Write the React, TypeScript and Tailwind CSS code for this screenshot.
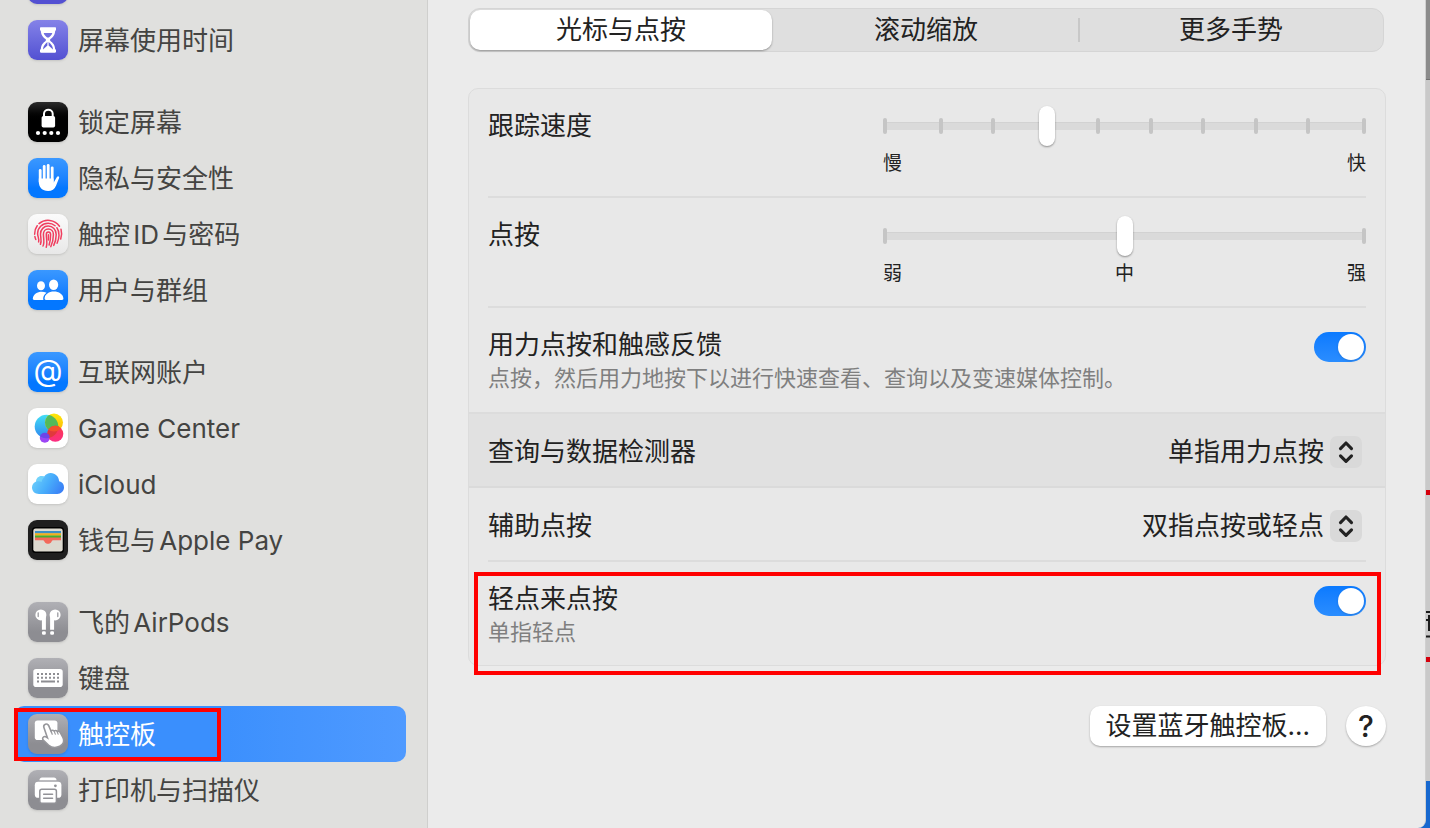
import { useState } from 'react';
import type { ReactNode } from 'react';

function Tile({ className, children }: { className: string; children?: ReactNode }) {
  return (
    <span className={`w-10 h-10 shrink-0 rounded-[9px] overflow-hidden shadow-sm flex items-center justify-center ${className}`}>
      {children}
    </span>
  );
}

function ScreenTimeIcon() {
  return (
    <Tile className="bg-linear-to-b from-[#8582e8] to-[#5350d2]">
      <svg viewBox="0 0 40 40" className="w-10 h-10" fill="#fff">
        <path
          fillRule="evenodd"
          d="M13 7.3h14c.8 0 1 .5 1 1.2v1.2c0 .7-.3 1-.8 1.1-.2 4.6-2.6 6.6-4.7 8.3-.6.5-.6 1.3 0 1.8 2.1 1.700 4.500 3.700 4.700 8.300.5.1.8.4.8 1.100v1.200c0 .7-.2 1.200-1 1.200H13c-.8 0-1-.5-1-1.200v-1.200c0-.7.3-1 .8-1.100.2-4.600 2.600-6.600 4.700-8.300.6-.5.6-1.300 0-1.800-2.100-1.700-4.500-3.700-4.700-8.300-.5-.1-.8-.4-.8-1.100V8.500c0-.7.2-1.200 1-1.200zM15.700 13c.6 2 1.900 3.300 3.400 4.500h1.800c1.500-1.200 2.800-2.500 3.400-4.500zM15 29.500l4.400-4v-3.600c-2.400 2-4.200 3.800-4.400 7.600zM25 29.500l-4.400-4v-3.600c2.400 2 4.200 3.800 4.400 7.600z"
        />
      </svg>
    </Tile>
  );
}

function LockIcon() {
  return (
    <Tile className="bg-linear-to-b from-[#2c2c2c] to-black to-50%">
      <svg viewBox="0 0 40 40" className="w-10 h-10" fill="#fff">
        <path d="M16 15v-3.200c0-5.300 8.700-5.300 8.700 0V15" fill="none" stroke="#fff" strokeWidth="2" />
        <rect x="13.6" y="14" width="13.5" height="11.5" rx="1.8" />
        <circle cx="10" cy="31" r="2.1" />
        <circle cx="16.7" cy="31" r="2.1" />
        <circle cx="23.3" cy="31" r="2.1" />
        <circle cx="30" cy="31" r="2.1" />
      </svg>
    </Tile>
  );
}

function HandIcon() {
  return (
    <Tile className="bg-linear-to-b from-[#3a98ff] to-[#0377ff] to-75%">
      <svg viewBox="0 0 40 40" className="w-10 h-10" fill="#fff">
        <g stroke="#fff" strokeWidth="2.8" strokeLinecap="round">
          <path d="M12.2 12.5V24" />
          <path d="M16.2 8.5V22" />
          <path d="M20.2 7.4V22" />
          <path d="M24.2 9.8V24" />
        </g>
        <path d="M10.8 20.5h14.8v4.2l3.3-5.700c1-1.400 2.700-.6 2.200 1.100l-3 7.400c-1.500 3.700-4.200 5.600-8 5.600-5.900 0-9.300-3.700-9.300-9.500z" />
      </svg>
    </Tile>
  );
}

function TouchIdIcon() {
  return (
    <Tile className="bg-linear-to-b from-[#fbfbfb] to-[#e8e8e8]">
      <svg viewBox="0 0 40 40" className="w-10 h-10" fill="none" stroke="#f03e5f" strokeWidth="1.5" strokeLinecap="round">
        <path d="M11 9.600a14 14 0 0 1 20.500 2.600" />
        <path d="M33 15.200c1 3.400.9 6.500-.3 9.800" />
        <path d="M9.200 11.700c-2 2.700-2.700 5.300-2.600 8.500M6.900 22.600c.2 1 .5 2 .9 2.900" />
        <path d="M10.600 27.900c.9-2.500-1-5.400-1-8.400 0-5.800 4.700-10.300 10.500-10.300 2.700 0 5.100.9 7 2.500M28.900 13.700c1.700 2.400 2.200 4.700 2.100 7.500-.1 3.200-.8 5.600-1.900 8" />
        <path d="M12.400 30.300c1.600-3.300.1-6.800.1-10.300 0-4.500 3.300-7.900 7.700-7.900 4.600 0 8 3.600 8 8.300 0 4.300-.8 7.800-2.500 11" />
        <path d="M15 32c1.800-3.600.4-7.900.4-11.800 0-3 2-5.200 4.900-5.200s5.100 2.300 5.100 5.400c0 4.700-.9 8.500-2.600 12.200" />
        <path d="M18.200 33.200c1.500-4 .1-8.500.1-12.800 0-1.500.8-2.500 2.100-2.500 1.400 0 2.200 1 2.200 2.600 0 3.900-.4 7.400-1.500 10.600" />
        <path d="M20.400 20.800v5.200" />
      </svg>
    </Tile>
  );
}

function UsersIcon() {
  return (
    <Tile className="bg-linear-to-b from-[#3a98ff] to-[#0377ff] to-75%">
      <svg viewBox="0 0 40 40" className="w-10 h-10" fill="#fff">
        <ellipse cx="13" cy="15.7" rx="4" ry="4.5" />
        <path d="M18.600 22.800c-5.800-2.500-13.200-.2-13.800 5.800 0 1 .4 1.400 1.400 1.400h9.200c-.8-2.700.6-5.500 3.200-7.200z" />
        <ellipse cx="25.6" cy="14.8" rx="4.6" ry="5.2" />
        <path d="M25.900 21.600c5 0 9.300 2.700 9.500 7 0 1-.4 1.400-1.400 1.400H18c-1 0-1.400-.4-1.400-1.400.2-4.300 4.300-7 9.300-7z" />
      </svg>
    </Tile>
  );
}

function AtIcon() {
  return (
    <Tile className="bg-linear-to-b from-[#3a98ff] to-[#0377ff] to-75% text-white text-[30px] leading-8">
      <span className="pb-1">@</span>
    </Tile>
  );
}

function GameCenterIcon() {
  return (
    <Tile className="bg-white">
      <svg viewBox="0 0 40 40" className="w-10 h-10">
        <defs>
          <linearGradient id="gcBlue" x1="0" y1="0" x2="0" y2="1">
            <stop offset="0" stopColor="#43dff5" />
            <stop offset="1" stopColor="#2f86f0" />
          </linearGradient>
          <linearGradient id="gcYellow" x1="0" y1="0" x2="0" y2="1">
            <stop offset="0" stopColor="#fde80a" />
            <stop offset="1" stopColor="#fdb50a" />
          </linearGradient>
          <linearGradient id="gcPink" x1="0" y1="0" x2="0" y2="1">
            <stop offset="0" stopColor="#fb3b4c" />
            <stop offset="1" stopColor="#fb2d83" />
          </linearGradient>
          <clipPath id="gcBlueClip">
            <circle cx="18.5" cy="18.5" r="11.8" />
          </clipPath>
          <clipPath id="gcYellowClip">
            <circle cx="26" cy="14.6" r="9" />
          </clipPath>
        </defs>
        <circle cx="16.8" cy="29.8" r="5" fill="#9c45f5" />
        <circle cx="18.5" cy="18.5" r="11.8" fill="url(#gcBlue)" />
        <circle cx="26" cy="14.6" r="9" fill="url(#gcYellow)" />
        <circle cx="26" cy="14.6" r="9" fill="#54b95a" clipPath="url(#gcBlueClip)" />
        <circle cx="27.3" cy="25.8" r="8" fill="url(#gcPink)" />
        <circle cx="27.3" cy="25.8" r="8" fill="#e0393c" clipPath="url(#gcBlueClip)" />
        <circle cx="27.3" cy="25.8" r="8" fill="#f4512c" clipPath="url(#gcYellowClip)" />
        <circle cx="16.8" cy="29.8" r="5" fill="#6d43e8" clipPath="url(#gcBlueClip)" />
      </svg>
    </Tile>
  );
}

function CloudIcon() {
  return (
    <Tile className="bg-white">
      <svg viewBox="0 0 40 40" className="w-10 h-10">
        <defs>
          <linearGradient id="cloud" x1="0" y1="0.3" x2="1" y2="0.7">
            <stop offset="0" stopColor="#6fd0fb" />
            <stop offset="0.5" stopColor="#48aefb" />
            <stop offset="1" stopColor="#3a80f6" />
          </linearGradient>
        </defs>
        <path
          d="M11 30c-4 0-7-2.800-7-6.500 0-2.900 1.700-5 4.100-5.900.2-3.500 2.600-5.700 5.600-5.700.9 0 1.700.2 2.500.6C17.600 10.300 20 9 22.700 9c4.700 0 8.200 3.600 8.400 8.300 2.900.5 4.900 3 4.900 6 0 3.800-3 6.700-6.700 6.700z"
          fill="url(#cloud)"
        />
        <path d="M8.100 17.600c.2-3.500 2.600-5.700 5.600-5.700 1.200 0 2.200.3 3.100 1-1.700 1.100-3 3-3.200 5-1.600-.9-3.700-1-5.500-.3z" fill="#7ddcfa" opacity="0.6" />
      </svg>
    </Tile>
  );
}

function WalletIcon() {
  return (
    <Tile className="bg-[#1f1f1f]">
      <svg viewBox="0 0 40 40" className="w-10 h-10">
        <rect x="4" y="7" width="32" height="26" rx="3.5" fill="#000" />
        <rect x="5.3" y="8.4" width="29.4" height="23.2" rx="2.3" fill="#dcd9cf" />
        <path d="M7 11h26v2.500H7z" fill="#3a8fc4" />
        <path d="M7 13.300h26v2.400H7z" fill="#f3ae1c" />
        <path d="M7 15.500h26v2.400H7z" fill="#43b02f" />
        <path d="M7 17.600h26v2.700h-7.200c-1.300 0-1.800.5-2.300 1.400-1.500 2.700-5.500 2.700-7 0-.5-.9-1-1.400-2.300-1.400H7z" fill="#f3695a" />
      </svg>
    </Tile>
  );
}

function AirPodsIcon() {
  return (
    <Tile className="bg-linear-to-b from-[#b0b0b5] to-[#8d8d92] to-75%">
      <svg viewBox="0 0 40 40" className="w-10 h-10" fill="#fff">
        <circle cx="12.9" cy="12.9" r="5.5" />
        <circle cx="27.100" cy="12.9" r="5.5" />
        <path d="M13.900 15h4v12.700h-4zM22.100 15h4v12.700h-4z" />
        <rect x="14" y="29.2" width="3.800" height="3.5" rx="1.3" />
        <rect x="22.2" y="29.2" width="3.800" height="3.5" rx="1.3" />
        <path d="M10.200 10.800v3.800M29.800 10.800v3.800" stroke="#9b9ba0" strokeWidth="1.3" strokeLinecap="round" />
      </svg>
    </Tile>
  );
}

function KeyboardIcon() {
  return (
    <Tile className="bg-linear-to-b from-[#b0b0b5] to-[#8d8d92] to-75%">
      <svg viewBox="0 0 40 40" className="w-10 h-10">
        <rect x="5.3" y="11" width="29.4" height="18" rx="2.8" fill="#fff" />
        <g stroke="#8d8d92" strokeWidth="2">
          <path d="M9 16h22" strokeDasharray="2 2" />
          <path d="M9 19.800h22" strokeDasharray="2 2" />
          <path d="M9 23.600h2M13 23.600h14M29 23.600h2" />
        </g>
      </svg>
    </Tile>
  );
}

function TrackpadIcon() {
  return (
    <Tile className="bg-linear-to-b from-[#b0b0b5] to-[#8d8d92] to-75%">
      <svg viewBox="0 0 40 40" className="w-10 h-10" fill="#fff">
        <rect x="6.8" y="6.5" width="22.6" height="19.5" rx="2.8" />
        <path
          d="M17.300 10.300c1.400-.7 2.800-.1 3.400 1.300l2.300 5.400c.8-.8 2.200-.9 3.100 0 .9-.6 2.200-.6 3 .3 1.300-.4 2.500.1 3.200 1.300l2.700 5c1.700 3.500.5 6.900-3.300 8.700-4 1.800-8.200 1.300-11.200-1.300l-5-4.600c-1-.9-1.200-2.200-.3-3.100.8-.9 2.100-1 3.200-.2l1 .7-3.500-10.300c-.5-1.400 0-2.600 1.400-3.200z"
          stroke="#97979b"
          strokeWidth="1.6"
        />
        <path d="M23.200 17.500l1 2.800M26.300 17.600l1 2.500M29.300 18l.8 2.100" stroke="#97979b" strokeWidth="1.2" strokeLinecap="round" />
      </svg>
    </Tile>
  );
}

function PrinterIcon() {
  return (
    <Tile className="bg-linear-to-b from-[#b0b0b5] to-[#8d8d92] to-75%">
      <svg viewBox="0 0 40 40" className="w-10 h-10" fill="#fff">
        <path d="M14 7.500h12c1.400 0 2.400.9 2.600 2.700H11.400c.2-1.800 1.200-2.700 2.600-2.700z" />
        <rect x="6.8" y="11.8" width="26.6" height="16" rx="3.4" />
        <rect x="11.8" y="19.3" width="16.6" height="14" rx="2" stroke="#929297" strokeWidth="1.5" />
        <path d="M15.700 24.200h8.800M15.700 28.200h8.800" stroke="#929297" strokeWidth="1.6" strokeLinecap="round" />
        <circle cx="27.4" cy="15.8" r="1.4" fill="#929297" />
      </svg>
    </Tile>
  );
}

const groups = [
  [{ label: '屏幕使用时间', icon: <ScreenTimeIcon /> }],
  [
    { label: '锁定屏幕', icon: <LockIcon /> },
    { label: '隐私与安全性', icon: <HandIcon /> },
    { label: '触控ID与密码', icon: <TouchIdIcon /> },
    { label: '用户与群组', icon: <UsersIcon /> },
  ],
  [
    { label: '互联网账户', icon: <AtIcon /> },
    { label: 'Game Center', icon: <GameCenterIcon /> },
    { label: 'iCloud', icon: <CloudIcon /> },
    { label: '钱包与Apple Pay', icon: <WalletIcon /> },
  ],
  [
    { label: '飞的AirPods', icon: <AirPodsIcon /> },
    { label: '键盘', icon: <KeyboardIcon /> },
    { label: '触控板', icon: <TrackpadIcon />, marked: true },
    { label: '打印机与扫描仪', icon: <PrinterIcon /> },
  ],
];

function Sidebar({ current, onSelect }: { current: string; onSelect: (label: string) => void }) {
  return (
    <nav className="w-[428px] shrink-0 bg-[#e0e0de] border-r border-[#cfcfcd] pl-3.5 pr-[21px]">
      {/* Tail of the entry that is scrolled out at the top */}
      <div className="h-3 overflow-hidden flex flex-col justify-end pl-3.5 pb-2">
        <Tile className="bg-[#5350d2]" />
      </div>
      <div className="flex flex-col gap-[26px]">
        {groups.map((items, index) => (
          <ul key={index}>
            {items.map((item) => (
              <li key={item.label} className="relative">
                <button
                  type="button"
                  onClick={() => onSelect(item.label)}
                  className={`w-full h-14 pl-3.5 flex items-center gap-2.5 rounded-[10px] text-[26px] leading-8 text-left ${
                    current === item.label
                      ? 'bg-linear-to-r from-[#3a8ffd] from-50% to-[#4f9aff] text-white'
                      : 'text-[#444442]'
                  }`}
                >
                  {item.icon}
                  <span className="pt-0.5 [text-autospace:normal]">{item.label}</span>
                </button>
                {'marked' in item && (
                  <div className="absolute left-0 top-0.5 w-[207px] h-[53px] border-4 border-[#ff0000] pointer-events-none"></div>
                )}
              </li>
            ))}
          </ul>
        ))}
      </div>
    </nav>
  );
}

const tabs = ['光标与点按', '滚动缩放', '更多手势'];

function Tabs() {
  const [active, setActive] = useState(0);

  return (
    <div role="tablist" className="mr-0.5 h-11 p-px grid grid-cols-3 rounded-xl bg-[#dfdfdf] border border-[#d5d5d5]">
      {tabs.map((tab, index) => (
        <button
          key={tab}
          type="button"
          role="tab"
          aria-selected={active === index}
          onClick={() => setActive(index)}
          className={`flex items-center rounded-[10px] text-[26px] leading-8 ${
            active === index ? 'mr-0.5 bg-white shadow-[0_1px_2px_rgba(0,0,0,0.35)]' : ''
          }`}
        >
          {index === 2 && <span className="w-0.5 h-6 bg-[#c8c8c8]"></span>}
          <span className="flex-1">{tab}</span>
        </button>
      ))}
    </div>
  );
}

type SliderProps = {
  id: string;
  max: number;
  initial: number;
  ticks: number;
  labels: string[];
};

function Slider({ id, max, initial, ticks, labels }: SliderProps) {
  const [value, setValue] = useState(initial);

  return (
    <div className="w-[483px]">
      <div className="grid items-center">
        <div className="col-start-1 row-start-1 h-2 mx-px bg-[#dadada] border-t border-[#d2d2d2]"></div>
        <div className="col-start-1 row-start-1 flex items-center">
          <span className="w-1 h-4 rounded-sm bg-[#c5c5c5]"></span>
          <span className="flex-1 px-[52px] flex justify-between">
            {Array.from({ length: ticks }, (_, i) => (
              <span key={i} className="w-1 h-4 rounded-sm bg-[#c5c5c5]"></span>
            ))}
          </span>
          <span className="w-1 h-4 rounded-sm bg-[#c5c5c5]"></span>
        </div>
        <input
          id={id}
          type="range"
          min={0}
          max={max}
          value={value}
          onChange={(e) => setValue(Number(e.target.value))}
          className="relative col-start-1 row-start-1 w-full h-10 appearance-none bg-transparent [&::-webkit-slider-thumb]:appearance-none [&::-webkit-slider-thumb]:w-4 [&::-webkit-slider-thumb]:h-10 [&::-webkit-slider-thumb]:rounded-full [&::-webkit-slider-thumb]:bg-white [&::-webkit-slider-thumb]:shadow-[0_1px_2px_rgba(0,0,0,0.4)]"
        />
      </div>
      <div className="flex justify-between pt-1 text-[19px] leading-7">
        {labels.map((label) => (
          <span key={label}>{label}</span>
        ))}
      </div>
    </div>
  );
}

function SwitchRow({ id, title, note }: { id: string; title: string; note: string }) {
  const [on, setOn] = useState(true);

  return (
    <div className="flex-1 flex justify-between">
      <div className="pt-5">
        <label htmlFor={id} className="block leading-[34px]">{title}</label>
        <p className="mt-px text-[22px] leading-[30px] text-[#7f7f7f]">{note}</p>
      </div>
      <input
        id={id}
        type="checkbox"
        role="switch"
        checked={on}
        onChange={(e) => setOn(e.target.checked)}
        className="mt-6 w-[52px] h-[30px] shrink-0 p-0.5 flex appearance-none rounded-full bg-[#c9c9c9] checked:bg-linear-to-b checked:from-[#0a7aff] checked:to-[#2a8dff] checked:justify-end before:w-[26px] before:h-[26px] before:rounded-full before:bg-white before:shadow-sm"
      />
    </div>
  );
}

function SelectRow({ id, title, options }: { id: string; title: string; options: string[] }) {
  return (
    <div className="flex-1 pr-1 pt-1 flex items-center justify-between">
      <label htmlFor={id} className="leading-8">{title}</label>
      <div className="relative flex items-center">
        <select id={id} className="appearance-none bg-transparent w-72 h-10 pb-0.5 pr-[38px] [text-align-last:right]">
          {options.map((option) => (
            <option key={option}>{option}</option>
          ))}
        </select>
        <span className="absolute right-0 w-8 h-8 rounded-[7px] bg-[#d9d9d9] flex items-center justify-center pointer-events-none">
          <svg viewBox="0 0 32 32" className="w-8 h-8" fill="none" stroke="#222" strokeWidth="3.1" strokeLinecap="round" strokeLinejoin="round">
            <path d="M10.500 12.600L16 7l5.500 5.600M10.500 19.800L16 25.400l5.500-5.600" />
          </svg>
        </span>
      </div>
    </div>
  );
}

function TrackpadPanel() {
  return (
    <section className="mt-9 rounded-[10px] border border-[#dcdcdc] bg-[#e8e8e8] text-[26px]">
      <div className="mx-[19px] h-[109px] border-b-2 border-[#dcdcdc] flex justify-between">
        <label htmlFor="tracking" className="pt-5 leading-[34px]">跟踪速度</label>
        <div className="pt-[17px]">
          <Slider id="tracking" max={9} initial={3} ticks={8} labels={['慢', '快']} />
        </div>
      </div>
      <div className="mx-[19px] h-[110px] border-b-2 border-[#dcdcdc] flex justify-between">
        <label htmlFor="click" className="pt-5 leading-[34px]">点按</label>
        <div className="pt-[18px]">
          <Slider id="click" max={2} initial={1} ticks={0} labels={['弱', '中', '强']} />
        </div>
      </div>
      <div className="px-[19px] h-[106px] border-b-2 border-[#dcdcdc] flex">
        <SwitchRow id="force" title="用力点按和触感反馈" note="点按，然后用力地按下以进行快速查看、查询以及变速媒体控制。" />
      </div>
      <div className="px-[19px] h-[74px] border-b-2 border-[#dadada] bg-[#e1e1e1] flex">
        <SelectRow id="lookup" title="查询与数据检测器" options={['单指用力点按']} />
      </div>
      <div className="mx-[19px] h-[74px] border-b-2 border-[#dcdcdc] flex">
        <SelectRow id="secondary" title="辅助点按" options={['双指点按或轻点']} />
      </div>
      <div className="relative px-[19px] h-[103px] flex">
        <SwitchRow id="tap" title="轻点来点按" note="单指轻点" />
        <div className="absolute left-[5px] right-1 top-2.5 h-[103px] border-4 border-[#ff0000] pointer-events-none"></div>
      </div>
    </section>
  );
}

// The window lying behind, of which only the right edge can be seen
function Backdrop() {
  return (
    <div className="absolute inset-y-0 right-0 w-6 bg-[#c9c9c9] flex flex-col items-end" aria-hidden="true">
      <div className="w-full h-20 bg-[#8b8b8b] border-b border-[#6f6f6f]"></div>
      <div className="w-full h-[410px]"></div>
      <div className="w-full h-[5px] bg-[#d5000c]"></div>
      <div className="w-full h-[116px]"></div>
      <svg viewBox="0 0 4 27" className="w-1 h-[27px]">
        <path d="M0 0h4v2H0zM0 24.500h4v2H0zM0 8h4v2H0zM2 4h2v16H2z" fill="#1c1c1c" />
      </svg>
      <div className="w-full h-[19px]"></div>
      <div className="w-full h-[5px] bg-[#d5000c]"></div>
      <div className="w-full h-[119px]"></div>
      <div className="w-full flex-1 bg-[#1768cf]"></div>
    </div>
  );
}

export default function App() {
  const [current, setCurrent] = useState<string>('触控板');

  return (
    <div lang="zh-CN" className="relative min-h-screen flex overflow-hidden text-[#222] font-['Inter','Noto_Sans_CJK_SC',sans-serif]">
      <Backdrop />
      <div className="relative flex-1 mr-1 flex rounded-br-lg overflow-hidden bg-[#ebebeb] border-r border-[#d0d0d0]">
        <Sidebar current={current} onSelect={setCurrent} />
        <main className="flex-1 min-w-0 pl-10 pr-[39px] pt-2">
          <Tabs />
          <TrackpadPanel />
          <div className="mt-10 flex justify-end gap-5 text-[26px] leading-8">
            <button type="button" className="h-10 px-4 rounded-[10px] bg-white shadow-[0_1px_2px_rgba(0,0,0,0.3)]">
              设置蓝牙触控板...
            </button>
            <button type="button" aria-label="帮助" className="w-10 h-10 rounded-full bg-white font-medium text-[30px] shadow-[0_1px_2px_rgba(0,0,0,0.3)]">
              ?
            </button>
          </div>
        </main>
      </div>
    </div>
  );
}
